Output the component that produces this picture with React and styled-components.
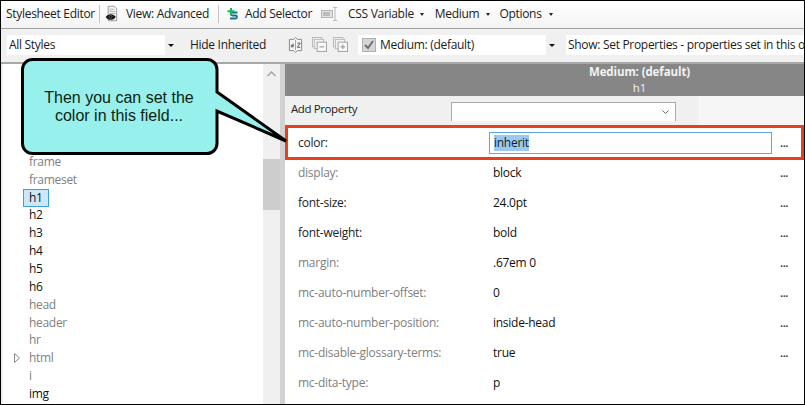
import React from 'react';
import styled, { createGlobalStyle } from 'styled-components';

const GlobalStyle = createGlobalStyle`
  html, body {
    margin: 0;
    padding: 0;
    background: #fff;
  }
  body {
    font-family: "Open Sans", "Noto Sans", sans-serif;
    font-size: 12px;
    color: #1c1c1c;
  }
`;

const Frame = styled.div`
  position: relative;
  box-sizing: border-box;
  width: 805px;
  height: 405px;
  border: 1px solid #000;
  overflow: hidden;
  display: flex;
  flex-direction: column;
  background: #f0f0f0;
`;

const Toolbar = styled.div`
  height: 25px;
  flex: none;
  display: flex;
  align-items: center;
  padding-bottom: 2px;
  background: linear-gradient(#ffffff, #f3f3f3);
  border-bottom: 1px solid #a0a0a0;
  letter-spacing: -0.3px;
  white-space: nowrap;
`;

const Sep = styled.div`
  width: 1px;
  height: 18px;
  background: #c4c4c4;
  margin: 0 ${(p) => p.$right}px 0 ${(p) => p.$left}px;
`;

const ToolText = styled.span`
  margin-left: ${(p) => p.$left || 0}px;
`;

const Caret = styled.span`
  width: 0;
  height: 0;
  margin: 1px 0 0 ${(p) => p.$left}px;
  border-left: 2.5px solid transparent;
  border-right: 2.5px solid transparent;
  border-top: 3px solid #222;
`;

const FilterBar = styled.div`
  height: 35px;
  flex: none;
  display: flex;
  align-items: flex-start;
  padding-top: 6px;
  box-sizing: border-box;
  background: #f0f0f0;
  border-bottom: 2px solid #a8a8a8;
  letter-spacing: -0.3px;
  line-height: 20px;
  white-space: nowrap;
`;

const Combo = styled.div`
  flex: none;
  box-sizing: border-box;
  width: ${(p) => p.$width}px;
  height: 20px;
  margin-left: ${(p) => p.$left}px;
  display: flex;
  align-items: center;
  background: #fff;
  padding-left: 2px;
`;

const ComboText = styled.span`
  flex: 1;
  overflow: hidden;
`;

const ComboArrow = styled.span`
  flex: none;
  align-self: stretch;
  width: 12px;
  background: #f0f0f0;
  display: flex;
  align-items: center;
  justify-content: center;
  &::after {
    content: '';
    border-left: 3px solid transparent;
    border-right: 3px solid transparent;
    border-top: 3px solid #111;
  }
`;

const CheckBox = styled.span`
  flex: none;
  width: 14px;
  height: 14px;
  margin: 0 4px 0 2px;
  background: #d6d6d6;
  border: 1px solid #b0b0b0;
  box-sizing: border-box;
  display: flex;
  align-items: center;
  justify-content: center;
`;

const FilterIcon = styled.svg`
  flex: none;
  display: block;
  margin-top: 2px;
  margin-left: ${(p) => p.$left}px;
`;

const Body = styled.div`
  flex: 1;
  min-height: 0;
  display: flex;
  padding-left: 2px;
`;

const Tree = styled.div`
  width: 260px;
  flex: none;
  background: #fff;
  padding-top: 89px;
  box-sizing: border-box;
  overflow: hidden;
`;

const TreeRow = styled.div`
  height: 17.85px;
  display: flex;
  align-items: center;
  padding-left: 26px;
  font-size: 12px;
  letter-spacing: -0.3px;
  color: ${(p) => (p.$set ? '#111' : '#808080')};
`;

const TreeLabel = styled.span`
  box-sizing: border-box;
  line-height: 16px;
  ${(p) => p.$selected && `
    margin-left: -6px;
    padding: 0 5px 0 5px;
    border: 1px solid #3f9fdc;
    background: #cce8f7;
  `}
`;

const Expander = styled.svg`
  margin-left: -15px;
  margin-right: 8px;
  flex: none;
`;

const ScrollBar = styled.div`
  width: 17px;
  flex: none;
  background: #f0f0f0;
  display: flex;
  flex-direction: column;
  align-items: center;
`;

const ScrollUp = styled.svg`
  margin-top: 7px;
  flex: none;
`;

const ScrollThumb = styled.div`
  width: 100%;
  height: 51px;
  margin-top: 82px;
  background: #cdcdcd;
`;

const Splitter = styled.div`
  width: 5px;
  flex: none;
  background: #d2d2d2;
`;

const Props = styled.div`
  flex: 1;
  min-width: 0;
  background: #fff;
  display: flex;
  flex-direction: column;
`;

const PropsHeader = styled.div`
  height: 32px;
  flex: none;
  background: #868686;
  color: #f2f2f2;
  text-align: center;
  padding-left: 204px;
  padding-right: 14px;
  font-size: 11.5px;
  letter-spacing: -0.1px;
  line-height: 16px;
  box-sizing: border-box;
`;

const HeaderTitle = styled.div`
  font-weight: 700;
`;

const AddRow = styled.div`
  height: 29px;
  flex: none;
  box-sizing: border-box;
  display: flex;
  align-items: flex-start;
  background: linear-gradient(90deg, #f0f0f0 414px, #f6f6f6 414px);
  font-size: 11.5px;
  letter-spacing: -0.4px;
  line-height: 16px;
  padding: 6px 0 0 6px;
`;

const AddLabel = styled.span`
  width: 160px;
  margin-top: -1px;
`;

const AddSelect = styled.div`
  width: 225px;
  height: 19px;
  box-sizing: border-box;
  background: #fff;
  border: 1px solid #ababab;
  border-bottom: none;
  display: flex;
  align-items: center;
  justify-content: flex-end;
  padding-right: 6px;
`;

const PropRow = styled.div`
  height: 30px;
  flex: none;
  display: flex;
  align-items: center;
  box-sizing: border-box;
  padding: 0 15px 5px 13px;
  font-size: 12px;
  letter-spacing: -0.26px;
  background: #fff;
`;

const HighlightRow = styled(PropRow)`
  height: 35px;
  padding-bottom: 0;
  outline: 3px solid #e8401c;
  outline-offset: -3px;
`;

const PropName = styled.span`
  width: 195px;
  flex: none;
  color: ${(p) => (p.$set ? '#222' : '#808080')};
`;

const PropValue = styled.span`
  flex: 1;
  color: #111;
`;

const ValueInput = styled.div`
  flex: 1;
  box-sizing: border-box;
  height: 22px;
  margin-left: -4px;
  margin-right: 8px;
  padding-left: 4px;
  border: 1px solid #5fa5e6;
  display: flex;
  align-items: center;
`;

const Selected = styled.span`
  background: #99c9ef;
  line-height: 16px;
`;

const More = styled.span`
  flex: none;
  width: 9px;
  height: 11px;
  font-size: 11px;
  line-height: 11px;
  font-weight: 700;
  letter-spacing: -0.5px;
  color: #444;
`;

const Callout = styled.div`
  position: absolute;
  left: 19px;
  top: 56px;
  width: 270px;
  height: 100px;
`;

const CalloutShape = styled.svg`
  display: block;
`;

const CalloutText = styled.div`
  position: absolute;
  left: 0;
  top: 32px;
  width: 198px;
  text-align: center;
  font-family: "Liberation Sans", Arial, sans-serif;
  font-size: 16px;
  line-height: 18px;
  color: #0e1f10;
`;

const EyeIcon = () => (
  <svg width="14" height="17" viewBox="0 0 16 20" style={{ display: 'block' }}>
    <path d="M3.500 1.500h7l3 3v14h-10z" fill="#f4f4f4" stroke="#8f8f8f" />
    <path d="M5 5h5M5 7.500h7M5 10h7" stroke="#a8a8a8" />
    <path d="M0.500 14c3-4 9-4 12 0-3 4.500-9 4.500-12 0z" fill="#1b1b1b" />
    <circle cx="6.500" cy="14" r="2" fill="#5a5a5a" />
    <circle cx="6.500" cy="14" r="1" fill="#000" />
  </svg>
);

const AddSelectorIcon = () => (
  <svg width="12" height="12" viewBox="0 0 12 12" style={{ display: 'block' }}>
    <path d="M10.500 4.500H5.500C3.500 4.500 3.500 7.500 5.500 7.500H8.500C10.500 7.500 10.500 10.500 8.500 10.500H3" fill="none" stroke="#19718f" strokeWidth="1.800" />
    <path d="M4 0v7M0.500 3.300h7" stroke="#16b85a" strokeWidth="2" />
  </svg>
);

const VariableIcon = () => (
  <svg width="17" height="14" viewBox="0 0 17 14" style={{ display: 'block' }}>
    <rect x="0.500" y="3.500" width="11" height="7" fill="#e2e2e2" stroke="#b4b4b4" />
    <rect x="2" y="5" width="7" height="4" fill="#bcbcbc" />
    <path d="M12 0.500h4M12 13.500h4M14 0.500v13" stroke="#b8b8b8" fill="none" />
  </svg>
);

const SortIcon = () => (
  <FilterIcon $left={22} width="15" height="16" viewBox="0 0 16 17">
    <path d="M8 0.500l2 2h4.500v12H10l-2 2-2-2H1.500v-12H6z" fill="#f4f4f4" stroke="#858585" />
    <path d="M8 3v11" stroke="#a0a0a0" />
    <path d="M5.500 7v3.500H3.500V8.700h2M10 6.500h3l-3 4.500h3" fill="none" stroke="#555" />
  </FilterIcon>
);

const StackIcon = ({ left, plus }) => (
  <FilterIcon $left={left} width="15" height="15" viewBox="0 0 16 16">
    <rect x="0.500" y="0.500" width="10" height="10" fill="#f2f2f2" stroke="#b8b8b8" />
    <rect x="2.500" y="2.500" width="10" height="10" fill="#f2f2f2" stroke="#b8b8b8" />
    <rect x="5.500" y="5.500" width="10" height="10" fill="#f7f7f7" stroke="#a0a0a0" />
    <path d={plus ? 'M8 10.500h5M10.500 8v5' : 'M8 10.500h5'} stroke="#8e8e8e" />
  </FilterIcon>
);

const treeRows = [
  { name: 'frame' },
  { name: 'frameset' },
  { name: 'h1', set: true, selected: true },
  { name: 'h2', set: true },
  { name: 'h3', set: true },
  { name: 'h4', set: true },
  { name: 'h5', set: true },
  { name: 'h6', set: true },
  { name: 'head' },
  { name: 'header' },
  { name: 'hr' },
  { name: 'html', expandable: true },
  { name: 'i' },
  { name: 'img', set: true },
];

const propRows = [
  { name: 'display:', value: 'block', more: true },
  { name: 'font-size:', value: '24.0pt', set: true, more: true },
  { name: 'font-weight:', value: 'bold', set: true, more: true },
  { name: 'margin:', value: '.67em 0', more: true },
  { name: 'mc-auto-number-offset:', value: '0', more: true },
  { name: 'mc-auto-number-position:', value: 'inside-head', more: true },
  { name: 'mc-disable-glossary-terms:', value: 'true', more: true },
  { name: 'mc-dita-type:', value: 'p' },
];

export default function App() {
  return (
    <>
      <GlobalStyle />
      <Frame>
        <Toolbar>
          <ToolText $left={5}>Stylesheet Editor</ToolText>
          <Sep $left={4} $right={5} />
          <EyeIcon />
          <ToolText $left={7}>View: Advanced</ToolText>
          <Sep $left={9} $right={8} />
          <AddSelectorIcon />
          <ToolText $left={6}>Add Selector</ToolText>
          <ToolText $left={9}><VariableIcon /></ToolText>
          <ToolText $left={10}>CSS Variable</ToolText>
          <Caret $left={6} />
          <ToolText $left={11}>Medium</ToolText>
          <Caret $left={7} />
          <ToolText $left={9}>Options</ToolText>
          <Caret $left={7} />
        </Toolbar>
        <FilterBar>
          <Combo $width={170} $left={6}>
            <ComboText>All Styles</ComboText>
            <ComboArrow />
          </Combo>
          <ToolText $left={13}>Hide Inherited</ToolText>
          <SortIcon />
          <StackIcon left={9} />
          <StackIcon left={6} plus />
          <Combo $width={200} $left={10}>
            <CheckBox>
              <svg width="10" height="10" viewBox="0 0 10 10">
                <path d="M1 5l3 3 5-7" fill="none" stroke="#6f6f6f" strokeWidth="2" />
              </svg>
            </CheckBox>
            <ComboText>Medium: (default)</ComboText>
            <ComboArrow />
          </Combo>
          <Combo $width={240} $left={8}>
            <ComboText>Show: Set Properties - properties set in this o</ComboText>
          </Combo>
        </FilterBar>
        <Body>
          <Tree>
            {treeRows.map((row) => (
              <TreeRow key={row.name} $set={row.set}>
                {row.expandable && (
                  <Expander width="7" height="10" viewBox="0 0 7 10">
                    <path d="M0.500 0.500v9l5-4.500z" fill="#fff" stroke="#8a8a8a" />
                  </Expander>
                )}
                <TreeLabel $selected={row.selected}>{row.name}</TreeLabel>
              </TreeRow>
            ))}
          </Tree>
          <ScrollBar>
            <ScrollUp width="9" height="6" viewBox="0 0 9 6">
              <path d="M0.500 5l4-4 4 4" fill="none" stroke="#a6a6a6" strokeWidth="1.500" />
            </ScrollUp>
            <ScrollThumb />
          </ScrollBar>
          <Splitter />
          <Props>
            <PropsHeader>
              <HeaderTitle>Medium: (default)</HeaderTitle>
              <div>h1</div>
            </PropsHeader>
            <AddRow>
              <AddLabel>Add Property</AddLabel>
              <AddSelect>
                <svg width="7" height="4" viewBox="0 0 7 4">
                  <path d="M0.500 0.500l3 3 3-3" fill="none" stroke="#666" />
                </svg>
              </AddSelect>
            </AddRow>
            <HighlightRow>
              <PropName $set>color:</PropName>
              <ValueInput><Selected>inherit</Selected></ValueInput>
              <More>...</More>
            </HighlightRow>
            {propRows.map((row) => (
              <PropRow key={row.name}>
                <PropName $set={row.set}>{row.name}</PropName>
                <PropValue>{row.value}</PropValue>
                {row.more && <More>...</More>}
              </PropRow>
            ))}
          </Props>
        </Body>
        <Callout>
          <CalloutShape width="270" height="100" viewBox="0 0 270 100">
            <path
              d="M13 2.500H187a10 10 0 0 1 10 10V35L266 84L197 54V86.500a10 10 0 0 1 -10 10H13a10 10 0 0 1 -10.500 -10V12.500a10 10 0 0 1 10.500 -10z"
              fill="#97f0ec"
              stroke="#000"
              strokeWidth="3"
            />
          </CalloutShape>
          <CalloutText>Then you can set the<br />color in this field...</CalloutText>
        </Callout>
      </Frame>
    </>
  );
}
